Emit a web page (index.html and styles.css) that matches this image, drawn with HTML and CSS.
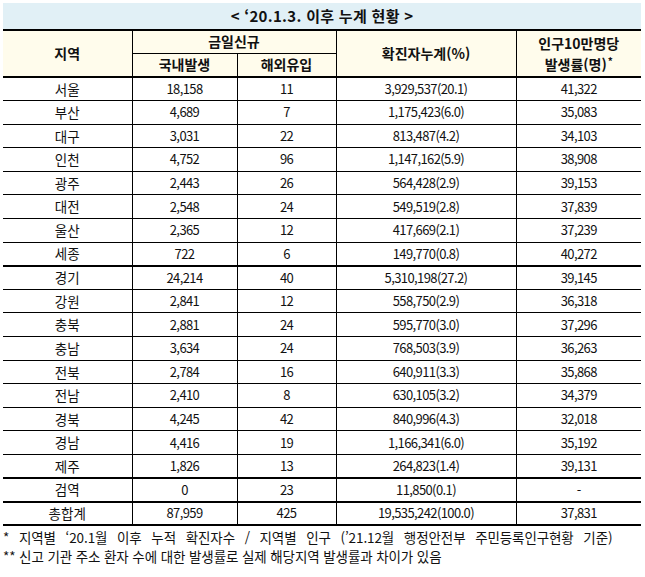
FILE: index.html
```html
<!DOCTYPE html>
<html lang="ko">
<head>
<meta charset="utf-8">
<link rel="stylesheet" href="styles.css">
</head>
<body>
<div class="page">
<table class="stats">
  <colgroup>
    <col class="c1"><col class="c2"><col class="c3"><col class="c4"><col class="c5">
  </colgroup>
  <thead>
    <tr><th colspan="5" class="title">&lt; ‘20.1.3. 이후 누계 현황 &gt;</th></tr>
    <tr class="h1">
      <th rowspan="2">지역</th>
      <th colspan="2" class="sub">금일신규</th>
      <th rowspan="2">확진자누계(%)</th>
      <th rowspan="2" class="two"><span class="ln">인구10만명당</span><span class="ln">발생률(명)<span class="star">*</span></span></th>
    </tr>
    <tr class="h2">
      <th class="dl">국내발생</th>
      <th>해외유입</th>
    </tr>
  </thead>
  <tbody>
    <tr><td>서울</td><td class="dl">18,158</td><td>11</td><td>3,929,537(20.1)</td><td>41,322</td></tr>
    <tr><td>부산</td><td class="dl">4,689</td><td>7</td><td>1,175,423(6.0)</td><td>35,083</td></tr>
    <tr><td>대구</td><td class="dl">3,031</td><td>22</td><td>813,487(4.2)</td><td>34,103</td></tr>
    <tr><td>인천</td><td class="dl">4,752</td><td>96</td><td>1,147,162(5.9)</td><td>38,908</td></tr>
    <tr><td>광주</td><td class="dl">2,443</td><td>26</td><td>564,428(2.9)</td><td>39,153</td></tr>
    <tr><td>대전</td><td class="dl">2,548</td><td>24</td><td>549,519(2.8)</td><td>37,839</td></tr>
    <tr><td>울산</td><td class="dl">2,365</td><td>12</td><td>417,669(2.1)</td><td>37,239</td></tr>
    <tr class="sep"><td>세종</td><td class="dl">722</td><td>6</td><td>149,770(0.8)</td><td>40,272</td></tr>
    <tr><td>경기</td><td class="dl">24,214</td><td>40</td><td>5,310,198(27.2)</td><td>39,145</td></tr>
    <tr><td>강원</td><td class="dl">2,841</td><td>12</td><td>558,750(2.9)</td><td>36,318</td></tr>
    <tr><td>충북</td><td class="dl">2,881</td><td>24</td><td>595,770(3.0)</td><td>37,296</td></tr>
    <tr><td>충남</td><td class="dl">3,634</td><td>24</td><td>768,503(3.9)</td><td>36,263</td></tr>
    <tr><td>전북</td><td class="dl">2,784</td><td>16</td><td>640,911(3.3)</td><td>35,868</td></tr>
    <tr><td>전남</td><td class="dl">2,410</td><td>8</td><td>630,105(3.2)</td><td>34,379</td></tr>
    <tr><td>경북</td><td class="dl">4,245</td><td>42</td><td>840,996(4.3)</td><td>32,018</td></tr>
    <tr><td>경남</td><td class="dl">4,416</td><td>19</td><td>1,166,341(6.0)</td><td>35,192</td></tr>
    <tr class="sep"><td>제주</td><td class="dl">1,826</td><td>13</td><td>264,823(1.4)</td><td>39,131</td></tr>
    <tr class="sep"><td>검역</td><td class="dl">0</td><td>23</td><td>11,850(0.1)</td><td>-</td></tr>
    <tr class="sep"><td>총합계</td><td class="dl">87,959</td><td>425</td><td>19,535,242(100.0)</td><td>37,831</td></tr>
  </tbody>
</table>
<p class="note wide">* 지역별 ‘20.1월 이후 누적 확진자수 / 지역별 인구 (’21.12월 행정안전부 주민등록인구현황 기준)</p>
<p class="note">** 신고 기관 주소 환자 수에 대한 발생률로 실제 해당지역 발생률과 차이가 있음</p>
</div>
</body>
</html>
```
FILE: styles.css
```css
html, body {
  margin: 0;
  padding: 0;
  background: #ffffff;
}
body {
  font-family: "Noto Sans CJK KR", "Noto Sans", sans-serif;
  color: #111;
}
.page {
  padding: 3px 4px 0 3px;
}
.stats {
  width: 638px;
  border-collapse: collapse;
  table-layout: fixed;
}
.c1 { width: 129px; }
.c2 { width: 105px; }
.c3 { width: 99px; }
.c4 { width: 180px; }
.c5 { width: 125px; }

.stats th,
.stats td {
  padding: 0;
  text-align: center;
  vertical-align: middle;
  border: 1px solid #000;
  line-height: 1.1;
}
.stats th:first-child,
.stats td:first-child { border-left: none; }
.stats th:last-child,
.stats td:last-child { border-right: none; }

.title {
  height: 26px;
  background: #e1f0f6;
  font-size: 15px;
  font-weight: bold;
  border-top: none !important;
  border-bottom: 2px solid #000 !important;
  letter-spacing: 0.3px;
}
.h1 th,
.h2 th {
  background: #fffcec;
  font-size: 14px;
  font-weight: bold;
  height: 22px;
}
.h2 th { border-bottom: 2px solid #000; }
.h1 th[rowspan] { border-bottom: 2px solid #000; }
.two .ln {
  display: block;
  line-height: 21px;
}
.star {
  display: inline-block;
  font-size: 10px;
  line-height: 6px;
  height: 6px;
  overflow: visible;
  vertical-align: 5px;
  margin-left: 1px;
}

.stats .dl { border-right: 1px dotted #8a8a8a; }
.stats tbody tr { height: 23.6px; }
.stats td {
  font-size: 13.5px;
}
.stats td:not(:first-child) {
  letter-spacing: -0.6px;
  font-size: 13px;
}
.stats tr.sep td { border-bottom: 2px solid #000; }

.note {
  margin: 0;
  font-size: 13.5px;
  line-height: 19px;
  letter-spacing: -0.1px;
  white-space: nowrap;
}
.note.wide {
  margin-top: 2px;
  word-spacing: 6px;
}
```
